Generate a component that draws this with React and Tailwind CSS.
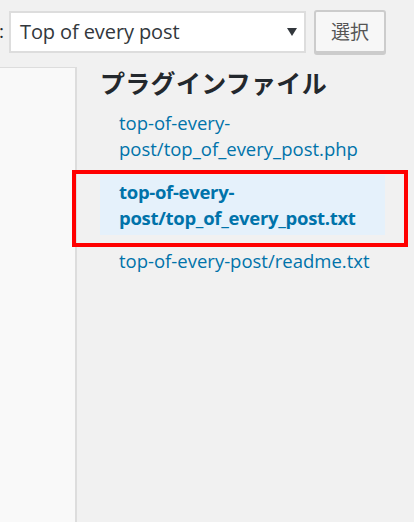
export default function App() {
    const files = [
        { text: ['top-of-every-', 'post/top_of_every_post.php'], active: false },
        { text: ['top-of-every-', 'post/top_of_every_post.txt'], active: true },
        { text: ['top-of-every-post/readme.txt'], active: false },
    ];

    return (
        <div className="relative w-[414px] h-[522px] overflow-hidden bg-[#f1f1f1] font-['Open_Sans','Noto_Sans_CJK_JP',sans-serif]">
            <div className="flex items-center h-[43px] mt-[10px]">
                <span className="text-[19px] text-[#23282d] w-[9px] -ml-[1px]">:</span>
                <div className="flex items-center justify-between w-[297px] h-[42px] ml-[1px] bg-white border-2 border-[#dddddd] pl-[9px] pr-[7px]">
                    <span className="text-[20px] text-[#32373c] tracking-[-0.1px]">Top of every post</span>
                    <svg width="10" height="8" viewBox="0 0 10 8">
                        <path d="M0 0 H10 L5 8 Z" fill="#32373c" />
                    </svg>
                </div>
                <button className="ml-[8px] w-[72px] h-[43px] rounded-[3px] bg-[#f7f7f7] border-2 border-[#cccccc] shadow-[0_2px_0_#ccc] text-[19px] text-[#555555] font-['Noto_Sans_CJK_JP',sans-serif]">
                    選択
                </button>
            </div>

            <div className="flex mt-[14px] h-[460px]">
                <div className="w-[77px] shrink-0 bg-[#f9f9f9] border-t border-r-2 border-[#dddddd]"></div>
                <div className="pl-[23px]">
                    <h2 className="text-[25px] leading-[30px] font-bold text-[#23282d] font-['Noto_Sans_CJK_JP',sans-serif] tracking-[0.3px]">
                        プラグインファイル
                    </h2>
                    <ul className="mt-[9px] w-[285px] flex flex-col gap-[9px]">
                        {files.map((f, i) => (
                            <li
                                key={i}
                                className={`px-[19px] py-[4px] text-[18.5px] leading-[26px] text-[#0073aa] whitespace-nowrap ${f.active ? 'bg-[#e5f1fb] font-bold tracking-[-0.3px]' : ''}`}
                            >
                                {f.text.map((t, j) => (
                                    <div key={j}>{t}</div>
                                ))}
                            </li>
                        ))}
                    </ul>
                </div>
            </div>

            <div className="absolute left-[72px] top-[170px] w-[336px] h-[77px] border-4 border-[#ff0000]"></div>
        </div>
    );
}
